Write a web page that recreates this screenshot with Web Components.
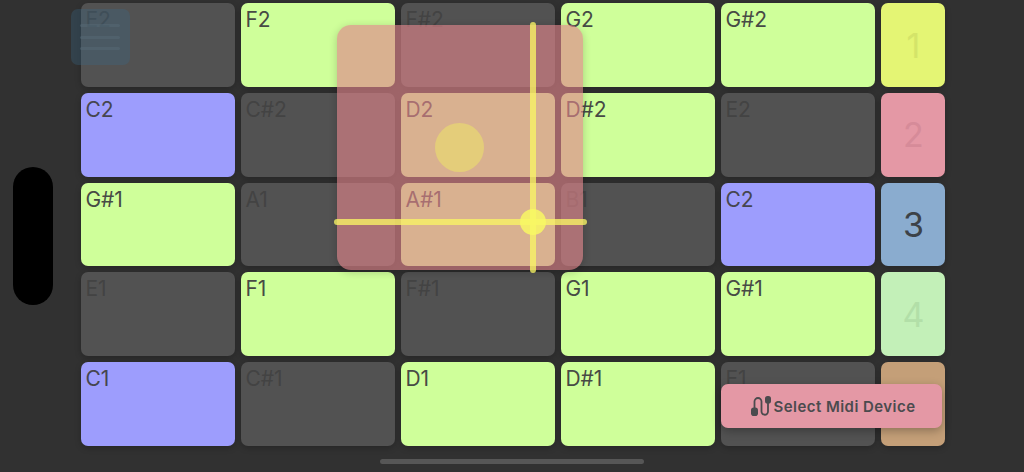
<!DOCTYPE html>
<html>
<head>
<meta charset="utf-8">
<title>Pads</title>
<style>
    html, body { margin: 0; height: 100%; background: #313131; overflow: hidden; }
    body { font-family: Inter, "Liberation Sans", sans-serif; }
</style>
</head>
<body>
<pad-board>
    <note-pad label="E2"></note-pad>
    <note-pad label="F2" kind="green"></note-pad>
    <note-pad label="F#2"></note-pad>
    <note-pad label="G2" kind="green"></note-pad>
    <note-pad label="G#2" kind="green"></note-pad>
    <side-pad label="1" color="#e4f574" ink="#d4e469"></side-pad>

    <note-pad label="C2" kind="root"></note-pad>
    <note-pad label="C#2"></note-pad>
    <note-pad label="D2" kind="green"></note-pad>
    <note-pad label="D#2" kind="green"></note-pad>
    <note-pad label="E2"></note-pad>
    <side-pad label="2" color="#e498a5" ink="#d68b99"></side-pad>

    <note-pad label="G#1" kind="green"></note-pad>
    <note-pad label="A1"></note-pad>
    <note-pad label="A#1" kind="green"></note-pad>
    <note-pad label="B1"></note-pad>
    <note-pad label="C2" kind="root"></note-pad>
    <side-pad label="3" color="#8aaccf" ink="#3c4248"></side-pad>

    <note-pad label="E1"></note-pad>
    <note-pad label="F1" kind="green"></note-pad>
    <note-pad label="F#1"></note-pad>
    <note-pad label="G1" kind="green"></note-pad>
    <note-pad label="G#1" kind="green"></note-pad>
    <side-pad label="4" color="#c3f0b8" ink="#b2dfa8"></side-pad>

    <note-pad label="C1" kind="root"></note-pad>
    <note-pad label="C#1"></note-pad>
    <note-pad label="D1" kind="green"></note-pad>
    <note-pad label="D#1" kind="green"></note-pad>
    <note-pad label="E1"></note-pad>
    <side-pad label="" color="#c49f78" ink="#b5916c"></side-pad>
</pad-board>
<menu-ghost></menu-ghost>
<xy-pad></xy-pad>
<midi-button>Select Midi Device</midi-button>
<device-chrome></device-chrome>

<script>
// One of the note cells. kind: green, root or nothing for the dark ones
class NotePad extends HTMLElement {
    constructor() {
        super();
        this.attachShadow({ mode: "open" });
        this.shadowRoot.innerHTML = `
        <style>
            :host {
                display: block;
                box-sizing: border-box;
                padding: 5px 4px;
                border-radius: 7px;
                background: #525252;
                color: #434343;
                font-size: 21px;
                line-height: 24px;
                box-shadow: 0 2px 6px rgba(0, 0, 0, 0.22);
            }
            :host([kind="green"]) { background: #cfff9a; color: #474a45; }
            :host([kind="root"]) { background: #9d9dfd; color: #46464f; }
        </style>
        <span>${this.getAttribute("label")}</span>
        `;
    }
}
customElements.define("note-pad", NotePad);

// Narrow coloured cell in the last column
class SidePad extends HTMLElement {
    constructor() {
        super();
        this.attachShadow({ mode: "open" });
        this.shadowRoot.innerHTML = `
        <style>
            :host {
                display: flex;
                align-items: center;
                justify-content: center;
                border-radius: 7px;
                background: ${this.getAttribute("color")};
                color: ${this.getAttribute("ink")};
                font-size: 34px;
                box-sizing: border-box;
                box-shadow: 0 2px 6px rgba(0, 0, 0, 0.22);
            }
        </style>
        <span>${this.getAttribute("label")}</span>
        `;
    }
}
customElements.define("side-pad", SidePad);

class PadBoard extends HTMLElement {
    constructor() {
        super();
        this.attachShadow({ mode: "open" });
        this.shadowRoot.innerHTML = `
        <style>
            :host {
                display: grid;
                grid-template-columns: repeat(5, 154px) 64px;
                grid-template-rows: repeat(5, 83.8px);
                gap: 5.8px 6px;
                padding: 3.4px 0 0 81.4px;
            }
        </style>
        <slot></slot>
        `;
    }
}
customElements.define("pad-board", PadBoard);

// The faded list button sitting over the first pad
class MenuGhost extends HTMLElement {
    constructor() {
        super();
        this.attachShadow({ mode: "open" });
        this.shadowRoot.innerHTML = `
        <style>
            :host {
                position: absolute;
                left: 71px;
                top: 9px;
                width: 59px;
                height: 56px;
                box-sizing: border-box;
                padding: 15px 10px 0 9px;
                display: flex;
                flex-direction: column;
                gap: 8.5px;
                border-radius: 7px;
                background: rgba(55, 105, 140, 0.3);
            }
            i { display: block; height: 3px; border-radius: 2px; background: rgba(85, 105, 118, 0.5); }
        </style>
        <i></i><i></i><i></i>
        `;
    }
}
customElements.define("menu-ghost", MenuGhost);

class XyPad extends HTMLElement {
    constructor() {
        super();
        this.attachShadow({ mode: "open" });
        this.shadowRoot.innerHTML = `
        <style>
            :host {
                position: absolute;
                left: 337px;
                top: 25px;
                width: 246px;
                height: 245px;
                border-radius: 14px;
                background: rgba(224, 132, 138, 0.63);
                box-shadow: 0 2px 8px rgba(0, 0, 0, 0.2);
            }
            .home {
                position: absolute;
                left: 98px;
                top: 98px;
                width: 49px;
                height: 49px;
                border-radius: 50%;
                background: #e4cd7a;
            }
            .v, .h {
                position: absolute;
                border-radius: 3px;
                background: rgba(248, 245, 100, 0.78);
            }
            .v { left: 193px; top: -3px; width: 6px; height: 251px; }
            .h { left: -3px; top: 194px; width: 253px; height: 6px; }
            .dot {
                position: absolute;
                left: 183px;
                top: 184px;
                width: 26px;
                height: 26px;
                border-radius: 50%;
                background: rgba(248, 248, 100, 0.85);
            }
        </style>
        <div class="home"></div>
        <div class="v"></div>
        <div class="h"></div>
        <div class="dot"></div>
        `;
    }
}
customElements.define("xy-pad", XyPad);

class MidiButton extends HTMLElement {
    constructor() {
        super();
        this.attachShadow({ mode: "open" });
        this.shadowRoot.innerHTML = `
        <style>
            :host {
                position: absolute;
                left: 721px;
                top: 384px;
                width: 221px;
                height: 44px;
                display: flex;
                align-items: center;
                justify-content: center;
                gap: 2px;
                padding-left: 3px;
                box-sizing: border-box;
                border-radius: 7px;
                background: #e498a5;
                color: #4b4b4e;
                font-size: 15px;
                font-weight: 600;
                letter-spacing: 0.45px;
                box-shadow: 0 3px 10px rgba(0, 0, 0, 0.28);
            }
            svg { display: block; flex: none; }
        </style>
        <svg width="21" height="22" viewBox="0 0 21 22">
            <path d="M3.5 13V6.5a3.5 3.5 0 0 1 7 0V16.5a3.25 3.25 0 0 0 6.5 0V8" fill="none" stroke="#4b4b4e" stroke-width="1.8"/>
            <rect x="0" y="12.5" width="7" height="8.5" rx="2.8" fill="#4b4b4e"/>
            <rect x="14" y="1" width="6" height="7.5" rx="2.6" fill="#4b4b4e"/>
        </svg>
        <slot></slot>
        `;
    }
}
customElements.define("midi-button", MidiButton);

// Camera pill on the left and the home bar at the bottom
class DeviceChrome extends HTMLElement {
    constructor() {
        super();
        this.attachShadow({ mode: "open" });
        this.shadowRoot.innerHTML = `
        <style>
            .pill {
                position: absolute;
                left: 13px;
                top: 167px;
                width: 40px;
                height: 138px;
                border-radius: 20px;
                background: #000;
            }
            .bar {
                position: absolute;
                left: 380px;
                top: 459px;
                width: 264px;
                height: 5px;
                border-radius: 3px;
                background: #565656;
            }
        </style>
        <div class="pill"></div>
        <div class="bar"></div>
        `;
    }
}
customElements.define("device-chrome", DeviceChrome);
</script>
</body>
</html>
